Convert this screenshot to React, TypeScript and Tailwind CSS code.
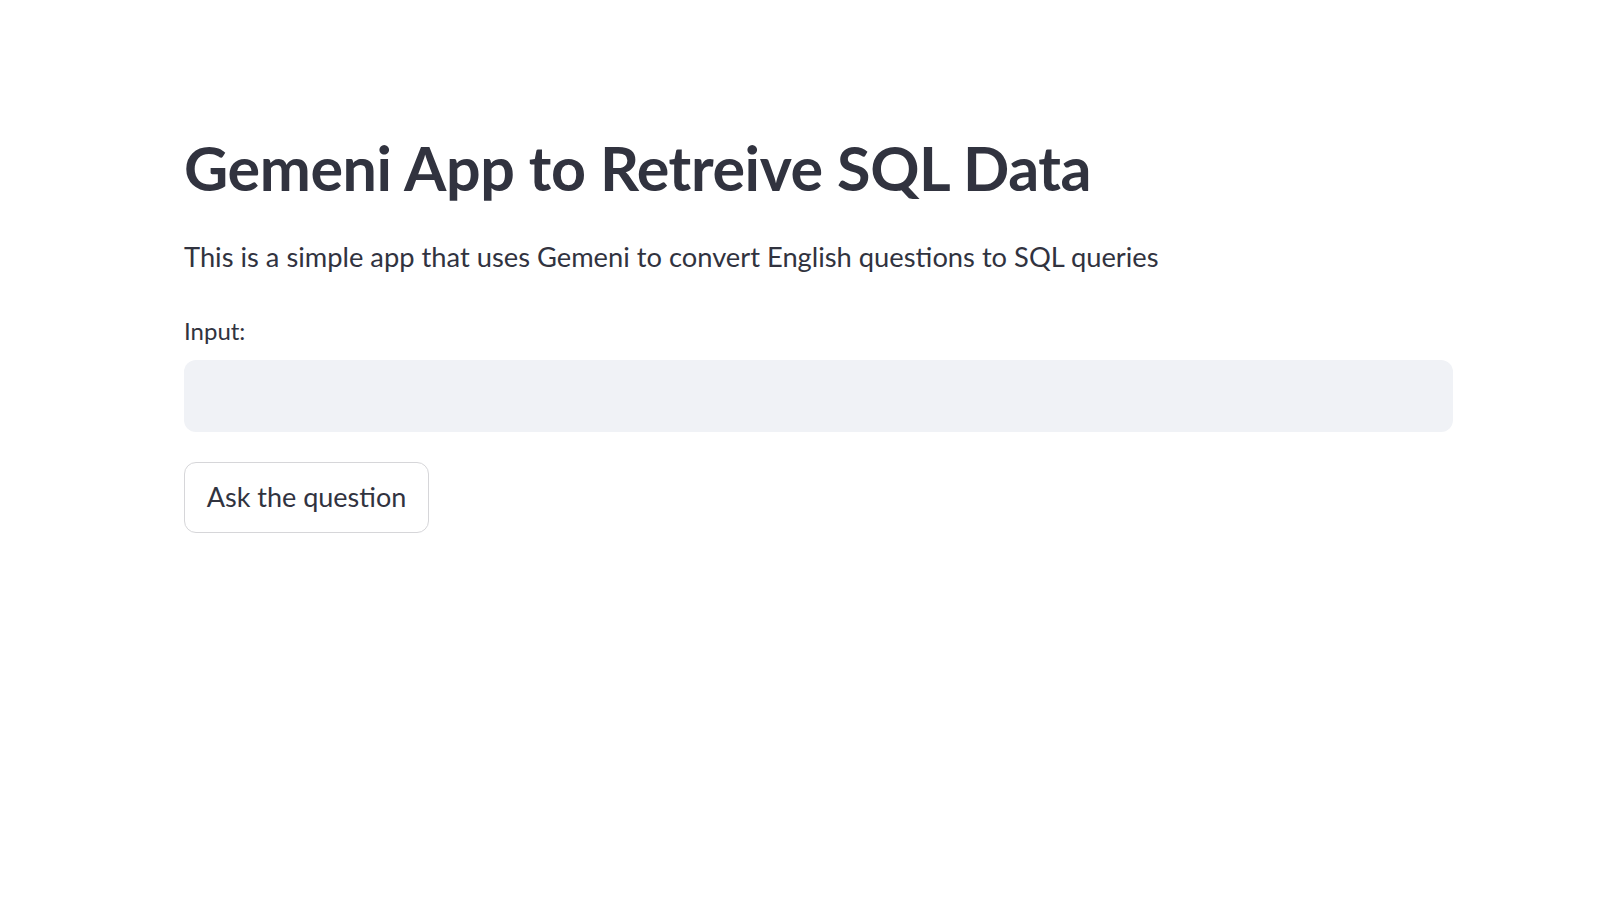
export default function App() {
  return (
    <div className="min-h-screen w-full bg-white text-[#31333f] font-['Lato','Noto_Sans',sans-serif]">
      <div className="flex flex-col pl-[184px] pr-[151px] pt-[128px]">
        <h1 className="text-[61px] leading-[80px] font-bold tracking-[-0.4px]">Gemeni App to Retreive SQL Data</h1>
        <p className="mt-[29px] text-[27.3px] leading-[40px]">
          This is a simple app that uses Gemeni to convert English questions to SQL queries
        </p>
        <label className="mt-[39px] text-[24px] leading-[30px]">Input:</label>
        <input
          type="text"
          className="mt-[14px] h-[72px] w-full rounded-[12px] bg-[#f0f2f6] px-5 text-[27px] outline-none"
        />
        <div className="mt-[30px]">
          <button className="h-[71px] w-[245px] rounded-[12px] border border-[#d6d6d9] bg-white text-[27px]">
            Ask the question
          </button>
        </div>
      </div>
    </div>
  );
}
